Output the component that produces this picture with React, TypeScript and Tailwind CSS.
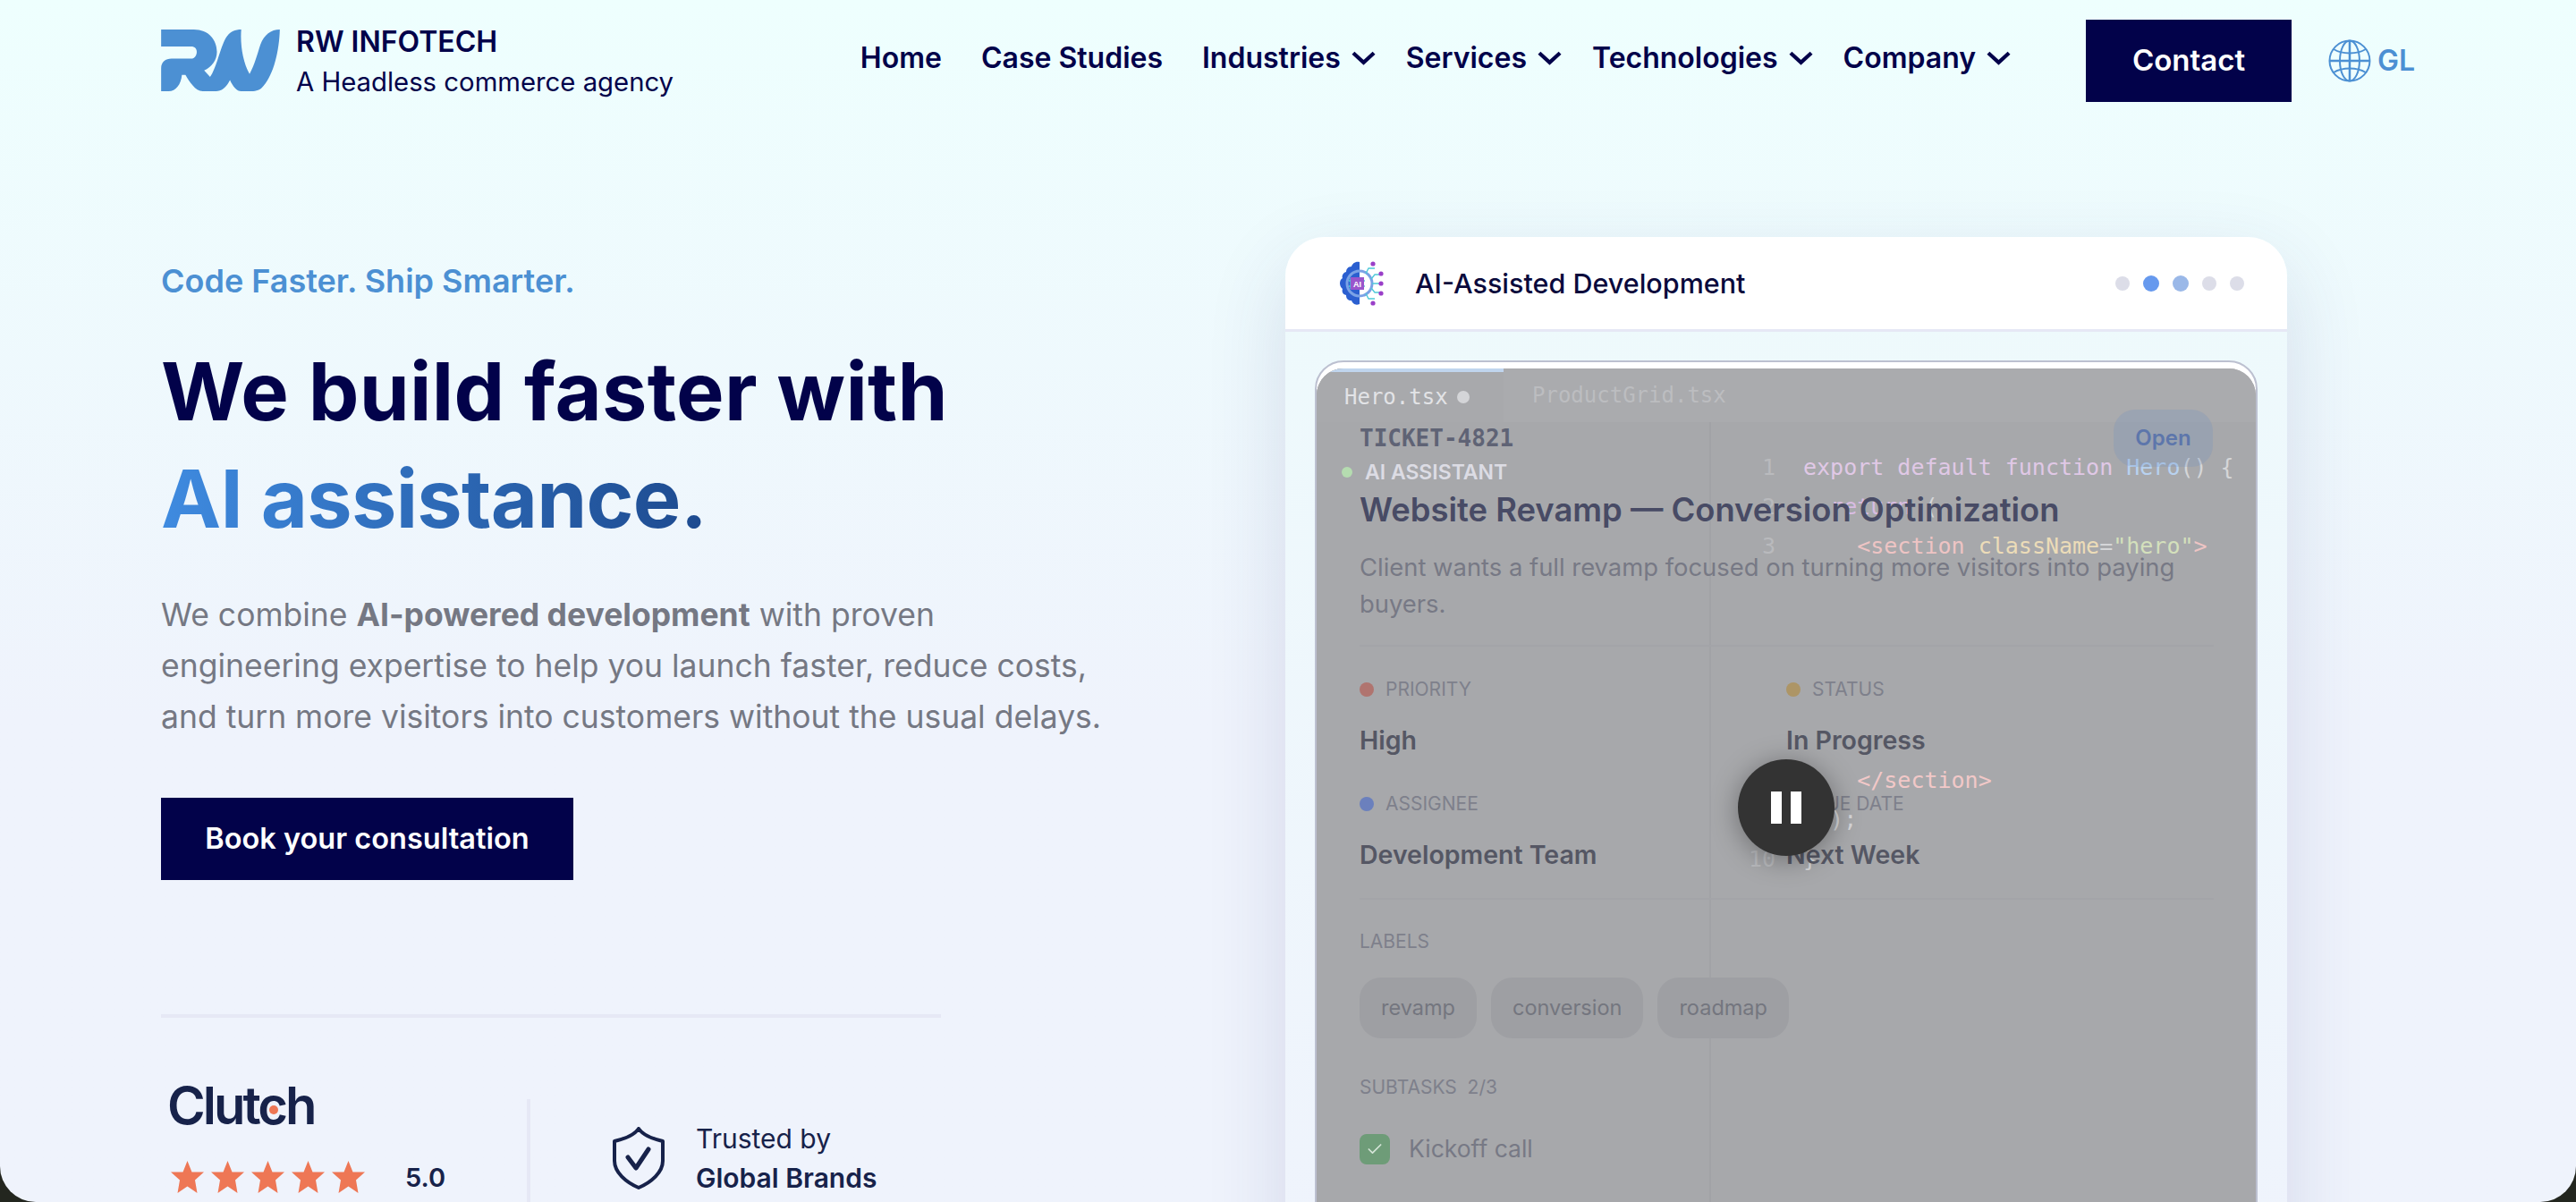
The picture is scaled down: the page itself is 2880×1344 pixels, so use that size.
import React from 'react'
import { Check } from 'lucide-react'

const navItems = [
  { label: 'Home' },
  { label: 'Case Studies' },
  { label: 'Industries', menu: true },
  { label: 'Services', menu: true },
  { label: 'Technologies', menu: true },
  { label: 'Company', menu: true },
]

const RwLogo = () => (
  <svg viewBox="30 40 400 208" className="w-[133px] h-[69px] shrink-0" fill="#4c90d3">
    <path d="M30 40 L140 40 C190 40 218 75 218 115 C218 145 200 165 175 178 L195 200 C215 170 225 120 240 85 C252 55 270 40 300 40 C296 90 305 150 328 190 C345 160 355 120 365 90 C377 58 400 40 430 40 C428 110 410 190 375 230 C365 244 350 248 335 248 L300 248 C285 248 272 232 262 210 C250 235 235 248 215 248 L170 248 C145 248 125 215 112 193 L100 193 C97 225 80 248 55 248 L30 248 L30 170 C30 150 45 138 65 138 L130 138 C145 138 150 125 150 115 C150 105 145 97 130 97 L30 97 Z" />
  </svg>
)

const Chevron = () => (
  <svg viewBox="0 0 28 16" className="w-[27px] h-[16px] shrink-0" fill="none" stroke="#02024a" strokeWidth="4.4">
    <path d="M2 2L14 13L26 2" />
  </svg>
)

const GlobeIcon = () => (
  <svg viewBox="0 0 48 48" className="w-[48px] h-[48px]" fill="none" stroke="#4c90d3" strokeWidth="2">
    <circle cx="24" cy="24" r="22.5" />
    <ellipse cx="24" cy="24" rx="11" ry="22.5" />
    <path d="M24 1.5V46.5M1.5 24H46.5" strokeWidth="2.5" />
    <path d="M6 11C16 17 32 17 42 11M6 37C16 31 32 31 42 37" />
  </svg>
)

const AiIcon = () => (
  <svg viewBox="0 0 50 50" className="w-[50px] h-[50px] shrink-0">
    <path d="M23 1C18 0 15 3 14 6C10 6 8 9 8 12C4 13 3 17 4 19C0 21 0 28 4 31C3 34 4 37 8 38C8 42 10 44 14 44C15 47 18 50 23 48Z" fill="#2b5fd0" />
    <circle cx="23" cy="25" r="14" fill="none" stroke="#7aa2e6" strokeWidth="3" />
    <g stroke="#4fc9d8" strokeWidth="1.4" fill="none">
      <path d="M13 19V31M18 19V31M11 22H29M11 28H29" />
      <path d="M30 14L33 8H40M36 20L40 15H46M37 25H46M36 30L40 35H46M30 36L33 42H40" />
    </g>
    <rect x="13" y="18" width="15" height="14" fill="#9a55cc" />
    <text x="20.5" y="28.5" fontSize="9" fontWeight="700" fill="#ffffff" textAnchor="middle" fontFamily="'Liberation Sans', sans-serif">AI</text>
    <g fill="#9a3fc8">
      <circle cx="38" cy="3" r="2.6" />
      <circle cx="47" cy="14" r="2.6" />
      <circle cx="47" cy="25" r="2.6" />
      <circle cx="47" cy="36" r="2.6" />
      <circle cx="38" cy="47" r="2.6" />
    </g>
  </svg>
)

const Star = () => (
  <svg viewBox="0 0 37 36" className="w-[37px] h-[36px]" fill="#ee7755">
    <path d="M18.5 0L23.5 12.5H37L27 21.5L29.5 36L18.5 28.5L7.5 36L10 21.5L0 12.5H13.5Z" />
  </svg>
)

const ShieldIcon = () => (
  <svg viewBox="0 0 60 70" className="w-[60px] h-[70px] shrink-0" fill="none" stroke="#17224a" strokeWidth="4" strokeLinejoin="round" strokeLinecap="round">
    <path d="M30 2C34 8 44 13 57 16V38C57 51 44 62 30 68C16 62 3 51 3 38V16C16 13 26 8 30 2Z" />
    <path d="M18 34L27 46L41 25" strokeWidth="5" />
  </svg>
)

const Field = ({ dot, label, value }: { dot: string; label: string; value: string }) => (
  <div>
    <div className="flex items-center gap-[13px] h-[30px]">
      <span className={`w-[16px] h-[16px] rounded-full ${dot}`} />
      <span className="text-[21px] text-[#7e808b]">{label}</span>
    </div>
    <p className="mt-[24px] text-[28.5px] leading-[36px] font-semibold text-[#555764]">{value}</p>
  </div>
)

const CodeLine = ({ n, children, className = '' }: { n: number; children?: React.ReactNode; className?: string }) => (
  <div className={`flex h-[44px] items-center ${className}`}>
    <span className="w-[103px] pr-[31px] text-right text-[#b9babd]">{n}</span>
    <span className="whitespace-pre">{children}</span>
  </div>
)

const chips = ['revamp', 'conversion', 'roadmap']

export default function App() {
  return (
    <div className="h-screen overflow-hidden bg-[#23261f] font-['Inter',sans-serif]">
      <div className="h-full overflow-hidden rounded-b-[40px] bg-gradient-to-b from-[#eefffe] via-[#eff3fc] via-60% to-[#eff3fc]">
        <header className="flex h-[136px] pt-[22px] pl-[180px] pr-[180px]">
          <div className="flex pt-[11px] h-[92px]">
            <RwLogo />
            <div className="ml-[18px] text-[#02024a] -mt-[8px]">
              <p className="text-[32px] leading-[44px] font-semibold">RW INFOTECH</p>
              <p className="text-[29.3px] leading-[45px]">A Headless commerce agency</p>
            </div>
          </div>
          <nav className="ml-auto flex h-[86px] items-center gap-[34px] text-[#02024a] text-[32px] font-semibold">
            {navItems.map((item) => (
              <div key={item.label} className={item.menu ? 'flex items-center gap-[12px]' : 'mr-[10px]'}>
                {item.label}
                {item.menu && <Chevron />}
              </div>
            ))}
          </nav>
          <button className="ml-[84px] h-[92px] w-[230px] bg-[#02024a] text-[33px] font-semibold text-white">Contact</button>
          <div className="ml-[41px] flex h-[92px] w-[97px] items-center gap-[7px] text-[32px] font-semibold text-[#4c90d3]">
            <GlobeIcon />
            GL
          </div>
        </header>

        <main className="flex pl-[180px] pt-[129px]">
          <section className="w-[1257px] shrink-0 pt-[27px]">
            <p className="text-[36px] leading-[44px] font-semibold text-[#4c90d3]">Code Faster. Ship Smarter.</p>
            <h1 className="mt-[42px] text-[90px] leading-[120px] font-bold tracking-[0.3px] text-[#02024a]">
              We build faster with
              <br />
              <span className="inline-block whitespace-nowrap bg-gradient-to-r from-[#3f8be0] to-[#1d4a8f] bg-clip-text tracking-[-0.7px] text-transparent">AI assistance.</span>
            </h1>
            <p className="mt-[41px] w-[1100px] text-[35.5px] leading-[57px] text-[#757883]">
              We combine <b className="font-bold">AI-powered development</b> with proven
              <br />
              engineering expertise to help you launch faster, reduce costs,
              <br />
              and turn more visitors into customers without the usual delays.
            </p>
            <button className="mt-[62px] h-[92px] w-[461px] bg-[#02024a] text-[32.5px] font-semibold text-white">Book your consultation</button>
            <div className="mt-[150px] h-[4px] w-[872px] bg-[#e6e8f5]" />
            <div className="mt-[70px] flex text-[#17224a]">
              <div className="w-[409px] shrink-0 pl-[7px]">
                <div className="relative w-[170px] text-[58px] leading-[56px] font-semibold tracking-[-3px]">
                  Clutch
                  <span className="absolute left-[114px] top-[28px] h-[10px] w-[10px] rounded-full bg-[#ee7755]" />
                </div>
                <div className="mt-[30px] flex items-center pl-[4px]">
                  <div className="flex gap-[8px]">
                    <Star />
                    <Star />
                    <Star />
                    <Star />
                    <Star />
                  </div>
                  <span className="ml-[45px] mt-[3px] text-[29px] leading-[40px] font-semibold">5.0</span>
                </div>
              </div>
              <div className="mt-[21px] h-[130px] w-[4px] shrink-0 bg-[#e6e8f5]" />
              <div className="ml-[91px] mt-[52px] flex gap-[34px]">
                <ShieldIcon />
                <div className="-mt-[9px] text-[30px] leading-[44px]">
                  <p>Trusted by</p>
                  <p className="font-semibold">Global Brands</p>
                </div>
              </div>
            </div>
          </section>

          <section className="h-[1200px] w-[1120px] shrink-0 overflow-hidden rounded-t-[44px] bg-gradient-to-b from-[#eefafc] to-[#eff3fc] shadow-[0_30px_90px_rgba(50,60,120,0.14)]">
            <div className="flex h-[106px] items-center border-b-[3px] border-[#e6e8f5] bg-white pl-[60px] pr-[48px]">
              <AiIcon />
              <span className="ml-[35px] text-[30.5px] font-medium text-[#0a0a3c]">AI-Assisted Development</span>
              <div className="ml-auto flex items-center gap-[15px]">
                <span className="h-[16px] w-[16px] rounded-full bg-[#dcdde8]" />
                <span className="h-[18px] w-[18px] rounded-full bg-[#6699ee]" />
                <span className="h-[18px] w-[18px] rounded-full bg-[#9ab8e8]" />
                <span className="h-[16px] w-[16px] rounded-full bg-[#dcdde8]" />
                <span className="h-[16px] w-[16px] rounded-full bg-[#dcdde8]" />
              </div>
            </div>

            <div className="relative mx-[33px] mt-[32px] h-[1000px] overflow-hidden rounded-[32px] border-2 border-[#bcc0d0] bg-white pt-[7px]">
              <div className="h-full overflow-hidden rounded-t-[30px] bg-[#a7a8ab] font-['DejaVu_Sans_Mono',monospace] text-[25px]">
                <div className="flex h-[60px] bg-[#aaabae] text-[24px]">
                  <div className="flex w-[209px] items-center gap-[10px] border-t-[4px] border-[#c0d5ee] bg-[#a8a9ac] pl-[31px] text-[#e2e3e6]">
                    Hero.tsx
                    <span className="h-[14px] w-[14px] rounded-full bg-[#d4d5d8]" />
                  </div>
                  <div className="pl-[32px] pt-[12px] text-[#bcbdc0]">ProductGrid.tsx</div>
                </div>
                <div className="ml-[439px] h-full border-l-2 border-[#a1a2a6] pt-[29px] text-[#d5d6d8]">
                  <CodeLine n={1}>
                    <span className="text-[#e0c8e6]">export default function </span>
                    <span className="text-[#b8d2f0]">Hero</span>() {'{'}
                  </CodeLine>
                  <CodeLine n={2}>
                    <span className="text-[#d8bce2]">  return</span> (
                  </CodeLine>
                  <CodeLine n={3}>
                    <span className="text-[#eec4c4]">    &lt;section </span>
                    <span className="text-[#ecdcb8]">className</span>=<span className="text-[#d4e0bc]">"hero"</span>
                    <span className="text-[#eec4c4]">&gt;</span>
                  </CodeLine>
                  <CodeLine n={8} className="mt-[218px]">
                    <span className="text-[#f2c8c8]">    &lt;/section&gt;</span>
                  </CodeLine>
                  <CodeLine n={9}>{'  );'}</CodeLine>
                  <CodeLine n={10}>{'}'}</CodeLine>
                </div>
              </div>

              <div className="absolute inset-0 pl-[48px] pr-[48px] pt-[53px] font-['Inter',sans-serif]">
                <div className="flex h-[64px] items-center justify-between">
                  <span className="font-['DejaVu_Sans_Mono',monospace] text-[26px] font-bold text-[#5f6375]">TICKET-4821</span>
                  <span className="flex h-[64px] w-[111px] items-center justify-center rounded-[24px] bg-[#6e8ec0]/25 text-[24px] font-semibold text-[#5d76ab]">Open</span>
                </div>
                <div className="absolute left-[28px] top-[109px] flex h-[28px] items-center gap-[14px] text-[23px] font-semibold text-[#dcdce4]">
                  <span className="h-[12px] w-[12px] rounded-full bg-[#b5dcb0]" />
                  AI ASSISTANT
                </div>
                <h2 className="mt-[25px] text-[36.4px] leading-[46px] font-semibold text-[#484b65]">Website Revamp — Conversion Optimization</h2>
                <p className="mt-[21px] text-[27.4px] leading-[41px] text-[#777985]">
                  Client wants a full revamp focused on turning more visitors into paying
                  <br />
                  buyers.
                </p>
                <div className="mt-[25px] w-[955px] border-y-2 border-[#a3a4a8] pt-[33px] pb-[30px]">
                  <div className="grid grid-cols-[477px_1fr] gap-y-[38px]">
                    <Field dot="bg-[#b0746f]" label="PRIORITY" value="High" />
                    <Field dot="bg-[#ad9566]" label="STATUS" value="In Progress" />
                    <Field dot="bg-[#6b80bd]" label="ASSIGNEE" value="Development Team" />
                    <Field dot="bg-[#3a3c60]" label="DUE DATE" value="Next Week" />
                  </div>
                </div>
                <p className="mt-[32px] text-[21px] leading-[30px] text-[#7e808b]">LABELS</p>
                <div className="mt-[25px] flex gap-[16px]">
                  {chips.map((chip) => (
                    <span key={chip} className="flex h-[68px] items-center rounded-[24px] bg-[#9e9fa3] px-[24px] text-[23.5px] text-[#74767f]">
                      {chip}
                    </span>
                  ))}
                </div>
                <p className="mt-[40px] text-[21px] leading-[30px] text-[#7e808b]">SUBTASKS&nbsp; 2/3</p>
                <div className="mt-[34px] flex items-center gap-[21px]">
                  <span className="flex h-[34px] w-[34px] items-center justify-center rounded-[8px] bg-[#6e9c78]">
                    <Check className="h-[20px] w-[20px] text-[#d5e5d8]" strokeWidth={2} />
                  </span>
                  <span className="text-[26.5px] text-[#777985]">Kickoff call</span>
                </div>
              </div>

              <div className="absolute left-[471px] top-[444px] flex h-[108px] w-[108px] items-center justify-center gap-[10px] rounded-full bg-[#333333] shadow-[0_4px_30px_rgba(0,0,0,0.35)]">
                <span className="h-[36px] w-[12px] bg-white" />
                <span className="h-[36px] w-[12px] bg-white" />
              </div>
            </div>
          </section>
        </main>
      </div>
    </div>
  )
}
